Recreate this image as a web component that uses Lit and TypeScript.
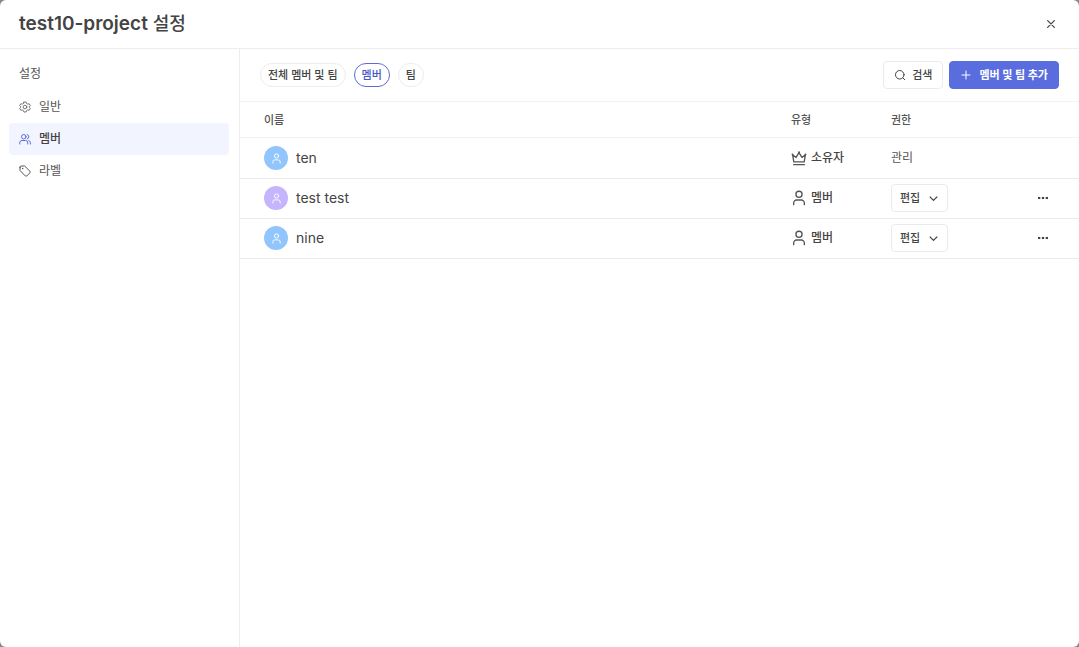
import { LitElement, html, css, svg, nothing } from "lit";
import { customElement, property, state } from "lit/decorators.js";

const icons = {
  gear: svg`<path d="M9.800 2h4.400l.9 3 2.200 1.200 3.100-.7 2.200 3.800-2.200 2.200v1l2.200 2.200-2.200 3.800-3.100-.7-2.200 1.200-.9 3H9.800l-.9-3-2.200-1.200-3.100.7-2.200-3.800 2.200-2.200v-1L1.400 9.300l2.200-3.800 3.100.7L8.900 5Z" stroke-width="1.600"/><circle cx="12" cy="12" r="3.600" stroke-width="1.600"/>`,
  users: svg`<circle cx="9.500" cy="7.500" r="4.500"/><path d="M1.500 22v-2.500A4.500 4.500 0 0 1 6 15h7a4.500 4.500 0 0 1 4.500 4.500V22M16.500 3.200a4.500 4.500 0 0 1 0 8.600M19.500 15.200a4.500 4.500 0 0 1 3.300 4.300V22"/>`,
  tag: svg`<path d="M2 4.500V11l10.600 10.800a2.200 2.200 0 0 0 3.100 0l6.200-6.200a2.200 2.200 0 0 0 0-3.100L11.300 2H4.500A2.500 2.500 0 0 0 2 4.500Z"/><path d="M7.200 7.200h.2" stroke-width="3"/>`,
  user: svg`<circle cx="12" cy="6.500" r="4.600"/><path d="M4 22v-2.600A4.400 4.400 0 0 1 8.400 15h7.200a4.400 4.400 0 0 1 4.400 4.400V22"/>`,
  crown: svg`<path d="M4.200 17.800 2.400 7l5.200 4.200L12 4l4.400 7.200L21.600 7l-1.800 10.800ZM4 22h16"/><path d="M2.200 6.500h.1M12 3.200h.1M21.700 6.500h.1" stroke-width="2.800"/>`,
  search: svg`<circle cx="11.500" cy="11.500" r="8.500"/><path d="m17.500 17.500 4 4"/>`,
  plus: svg`<path d="M12 4v16M4 12h16"/>`,
  close: svg`<path d="m4 4 16 16M20 4 4 20"/>`,
  chevron: svg`<path d="m3 8 9 9 9-9"/>`,
  more: svg`<g fill="currentColor" stroke="none"><rect x="0" y="9.500" width="5.500" height="5"/><rect x="9.250" y="9.500" width="5.500" height="5"/><rect x="18.500" y="9.500" width="5.500" height="5"/></g>`,
};

type IconName = keyof typeof icons;

const base = css`
  *, *::before, *::after { box-sizing: border-box; }
  button, select { font: inherit; color: inherit; margin: 0; cursor: pointer; }
`;

@customElement("ui-icon")
class UiIcon extends LitElement {
  @property() name: IconName = "user";

  static styles = css`
    :host { display: inline-flex; flex: none; width: 12px; height: 12px; }
    svg {
      width: 100%;
      height: 100%;
      fill: none;
      stroke: currentColor;
      stroke-width: var(--stroke, 2);
      stroke-linecap: round;
      stroke-linejoin: round;
    }
  `;

  render() {
    return html`<svg viewBox="0 0 24 24" aria-hidden="true">${icons[this.name]}</svg>`;
  }
}

@customElement("settings-nav")
class SettingsNav extends LitElement {
  @state() private current = "members";

  private items: { id: string; label: string; icon: IconName }[] = [
    { id: "general", label: "일반", icon: "gear" },
    { id: "members", label: "멤버", icon: "users" },
    { id: "labels", label: "라벨", icon: "tag" },
  ];

  static styles = [base, css`
    :host { display: block; padding: 8px 10px 8px 9px; border-right: 1px solid #ededed; }
    .title { margin: 0; padding: 0 10px; font-size: 12px; font-weight: 400; line-height: 34px; color: #555; }
    .item {
      display: flex;
      align-items: center;
      gap: 8px;
      height: 32px;
      padding: 0 10px;
      border-radius: 4px;
      color: #555;
      font-size: 12px;
      text-decoration: none;
    }
    .item.active { background: #f2f4ff; color: #444; font-weight: 500; }
    .item.active ui-icon { color: #5a6bdf; }
  `];

  render() {
    return html`
      <h2 class="title">설정</h2>
      <nav>
        ${this.items.map((i) => html`
          <a class="item ${i.id === this.current ? "active" : ""}" href="#${i.id}"
            @click=${() => (this.current = i.id)}>
            <ui-icon name=${i.icon}></ui-icon>${i.label}
          </a>`)}
      </nav>`;
  }
}

interface Member {
  name: string;
  color: string;
  owner?: boolean;
}

@customElement("member-table")
class MemberTable extends LitElement {
  private members: Member[] = [
    { name: "ten", color: "#93c5fd", owner: true },
    { name: "test test", color: "#c4b5fd" },
    { name: "nine", color: "#93c5fd" },
  ];

  static styles = [base, css`
    :host { display: block; }
    table { width: 100%; border-collapse: separate; border-spacing: 0; table-layout: fixed; }
    th, td { padding: 0; text-align: left; vertical-align: middle; border-bottom: 1px solid #ebebeb; }
    thead th, thead td { height: 36px; font-size: 11px; font-weight: 500; color: #555; border-color: #f3f3f3; }
    th:first-child, td:first-child { padding-left: 24px; }
    tbody td { height: 40px; font-size: 14px; }
    tbody .owner td { height: 41px; }
    tbody .member td { padding-bottom: 1px; }
    .type { width: 100px; }
    .role { width: 134px; }
    .actions { width: 54px; }
    .cell { display: flex; align-items: center; gap: 8px; }
    .avatar {
      display: flex;
      align-items: center;
      justify-content: center;
      width: 24px;
      height: 24px;
      border-radius: 50%;
      color: #fff;
    }
    .avatar ui-icon { width: 11px; height: 11px; }
    .kind { gap: 4px; font-size: 12px; font-weight: 500; }
    .kind ui-icon { width: 16px; height: 16px; color: #555; }
    .plain { display: block; font-size: 12px; color: #555; }
    .select { position: relative; display: flex; width: 57px; }
    .select select {
      appearance: none;
      width: 100%;
      height: 28px;
      padding: 0 8px;
      border: 1px solid #ebebeb;
      border-radius: 4px;
      background: #fff;
      font-size: 11px;
      font-weight: 500;
    }
    .select ui-icon { position: absolute; right: 10px; top: 10px; width: 9px; height: 9px; pointer-events: none; --stroke: 3; }
    .more {
      display: flex;
      align-items: center;
      justify-content: center;
      width: 36px;
      height: 28px;
      padding: 0;
      border: 0;
      background: none;
    }
    .more ui-icon { width: 10px; height: 10px; }
  `];

  render() {
    return html`
      <table>
        <thead>
          <tr>
            <th scope="col">이름</th>
            <th scope="col" class="type">유형</th>
            <th scope="col" class="role">권한</th>
            <td class="actions"></td>
          </tr>
        </thead>
        <tbody>
          ${this.members.map((m) => html`
            <tr class=${m.owner ? "owner" : "member"}>
              <td>
                <div class="cell">
                  <span class="avatar" style="background:${m.color}"><ui-icon name="user"></ui-icon></span>
                  ${m.name}
                </div>
              </td>
              <td>
                <div class="cell kind">
                  <ui-icon name=${m.owner ? "crown" : "user"}></ui-icon>${m.owner ? "소유자" : "멤버"}
                </div>
              </td>
              <td>
                ${m.owner
                  ? html`<span class="plain">관리</span>`
                  : html`<div class="select">
                      <select aria-label="권한"><option>편집</option></select>
                      <ui-icon name="chevron"></ui-icon>
                    </div>`}
              </td>
              <td>
                ${m.owner
                  ? nothing
                  : html`<button class="more" type="button" aria-haspopup="menu"><ui-icon name="more"></ui-icon></button>`}
              </td>
            </tr>`)}
        </tbody>
      </table>`;
  }
}

@customElement("app-root")
class AppRoot extends LitElement {
  @state() private filter = "멤버";

  static styles = [base, css`
    :host {
      display: block;
      background: #888;
      font-family: Inter, "Noto Sans CJK KR", sans-serif;
      line-height: 16px;
      color: #444;
    }
    .dialog {
      display: flex;
      flex-direction: column;
      min-height: 100vh;
      overflow: hidden;
      border-radius: 6px;
      background: #fff;
    }
    .header {
      display: flex;
      align-items: center;
      justify-content: space-between;
      height: 49px;
      padding: 0 18px 0 19px;
      border-bottom: 1px solid #ededed;
    }
    .heading { margin: 0; font-size: 19px; line-height: 24px; font-weight: 600; }
    .suffix { font-size: 18px; font-weight: 500; }
    .close {
      display: flex;
      align-items: center;
      justify-content: center;
      width: 20px;
      height: 20px;
      padding: 0;
      border: 0;
      background: none;
    }
    .close ui-icon { width: 10px; height: 10px; --stroke: 3; }
    .body { display: grid; grid-template-columns: 240px 1fr; flex: 1; }
    .toolbar {
      display: flex;
      align-items: center;
      justify-content: space-between;
      height: 53px;
      padding: 0 20px;
      border-bottom: 1px solid #f3f3f3;
      font-size: 11px;
      font-weight: 500;
    }
    .filters { display: flex; gap: 8px; }
    .pill {
      height: 24px;
      padding: 0 7px;
      border: 1px solid #ededed;
      border-radius: 12px;
      background: #fff;
    }
    .pill.on { border-color: #5a6bdf; color: #4757c9; }
    .tools { display: flex; gap: 6px; }
    .tool {
      display: flex;
      align-items: center;
      gap: 6px;
      height: 28px;
      padding: 0 10px;
      border: 1px solid #ebebeb;
      border-radius: 4px;
      background: #fff;
    }
    .tool.primary { gap: 7px; border-color: #5a6ddf; background: #5a6ddf; color: #fff; font-weight: 700; }
  `];

  render() {
    return html`
      <div class="dialog">
        <header class="header">
          <h1 class="heading">test10-project <span class="suffix">설정</span></h1>
          <button class="close" type="button" aria-label="닫기"><ui-icon name="close"></ui-icon></button>
        </header>
        <div class="body">
          <settings-nav></settings-nav>
          <main>
            <div class="toolbar">
              <div class="filters">
                ${["전체 멤버 및 팀", "멤버", "팀"].map((f) => html`
                  <button type="button" class="pill ${f === this.filter ? "on" : ""}"
                    @click=${() => (this.filter = f)}>${f}</button>`)}
              </div>
              <div class="tools">
                <button type="button" class="tool"><ui-icon name="search"></ui-icon>검색</button>
                <button type="button" class="tool primary"><ui-icon name="plus"></ui-icon>멤버 및 팀 추가</button>
              </div>
            </div>
            <member-table></member-table>
          </main>
        </div>
      </div>`;
  }
}
